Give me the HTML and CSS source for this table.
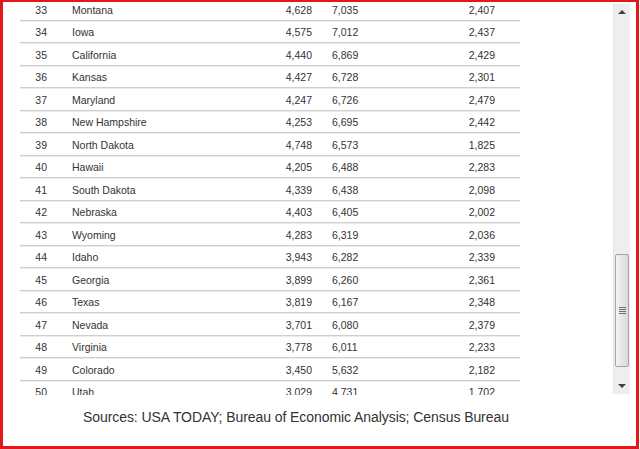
FILE: index.html
```html
<!DOCTYPE html>
<html>
<head>
<meta charset="utf-8">
<link rel="stylesheet" href="styles.css">
</head>
<body>
<div class="frame">
  <div class="viewport">
    <div class="table-area">
      <div class="table">
        <div class="row"><span class="rank">33</span><span class="name">Montana</span><span class="c3">4,628</span><span class="c4">7,035</span><span class="c5">2,407</span></div>
        <div class="row"><span class="rank">34</span><span class="name">Iowa</span><span class="c3">4,575</span><span class="c4">7,012</span><span class="c5">2,437</span></div>
        <div class="row"><span class="rank">35</span><span class="name">California</span><span class="c3">4,440</span><span class="c4">6,869</span><span class="c5">2,429</span></div>
        <div class="row"><span class="rank">36</span><span class="name">Kansas</span><span class="c3">4,427</span><span class="c4">6,728</span><span class="c5">2,301</span></div>
        <div class="row"><span class="rank">37</span><span class="name">Maryland</span><span class="c3">4,247</span><span class="c4">6,726</span><span class="c5">2,479</span></div>
        <div class="row"><span class="rank">38</span><span class="name">New Hampshire</span><span class="c3">4,253</span><span class="c4">6,695</span><span class="c5">2,442</span></div>
        <div class="row"><span class="rank">39</span><span class="name">North Dakota</span><span class="c3">4,748</span><span class="c4">6,573</span><span class="c5">1,825</span></div>
        <div class="row"><span class="rank">40</span><span class="name">Hawaii</span><span class="c3">4,205</span><span class="c4">6,488</span><span class="c5">2,283</span></div>
        <div class="row"><span class="rank">41</span><span class="name">South Dakota</span><span class="c3">4,339</span><span class="c4">6,438</span><span class="c5">2,098</span></div>
        <div class="row"><span class="rank">42</span><span class="name">Nebraska</span><span class="c3">4,403</span><span class="c4">6,405</span><span class="c5">2,002</span></div>
        <div class="row"><span class="rank">43</span><span class="name">Wyoming</span><span class="c3">4,283</span><span class="c4">6,319</span><span class="c5">2,036</span></div>
        <div class="row"><span class="rank">44</span><span class="name">Idaho</span><span class="c3">3,943</span><span class="c4">6,282</span><span class="c5">2,339</span></div>
        <div class="row"><span class="rank">45</span><span class="name">Georgia</span><span class="c3">3,899</span><span class="c4">6,260</span><span class="c5">2,361</span></div>
        <div class="row"><span class="rank">46</span><span class="name">Texas</span><span class="c3">3,819</span><span class="c4">6,167</span><span class="c5">2,348</span></div>
        <div class="row"><span class="rank">47</span><span class="name">Nevada</span><span class="c3">3,701</span><span class="c4">6,080</span><span class="c5">2,379</span></div>
        <div class="row"><span class="rank">48</span><span class="name">Virginia</span><span class="c3">3,778</span><span class="c4">6,011</span><span class="c5">2,233</span></div>
        <div class="row"><span class="rank">49</span><span class="name">Colorado</span><span class="c3">3,450</span><span class="c4">5,632</span><span class="c5">2,182</span></div>
        <div class="row"><span class="rank">50</span><span class="name">Utah</span><span class="c3">3,029</span><span class="c4">4,731</span><span class="c5">1,702</span></div>
      </div>
    </div>
    <div class="scrollbar">
      <div class="arrow up"></div>
      <div class="track">
        <div class="thumb"><span class="grip"></span></div>
      </div>
      <div class="arrow down"></div>
    </div>
  </div>
  <p class="sources">Sources: USA TODAY; Bureau of Economic Analysis; Census Bureau</p>
</div>
</body>
</html>
```

FILE: styles.css
```css
html, body {
  margin: 0;
  padding: 0;
  background: #fff;
}
.frame {
  box-sizing: border-box;
  width: 639px;
  height: 449px;
  border: 3px solid #e3161c;
  border-top-width: 2px;
  font-family: "Liberation Sans", Arial, sans-serif;
}
.viewport {
  display: flex;
  height: 393px;
}
.table-area {
  width: 610px;
  overflow: hidden;
}
.table {
  margin: -3.8px 0 0 17px;
  width: 500px;
}
.row {
  display: grid;
  grid-template-columns: 27px 205px 60px 60px 123px 25px;
  height: 22.5px;
  box-sizing: border-box;
  padding-top: 2px;
  align-items: center;
  border-bottom: 1px solid #cfcfcf;
  box-shadow: 0 1px 0 #ececec;
  font-size: 10.5px;
  color: #333;
}
.rank { text-align: right; }
.name { padding-left: 25px; }
.c3 { text-align: right; }
.c4 { padding-left: 20px; }
.c5 { text-align: right; }
.scrollbar {
  width: 17px;
  margin-top: 2px;
  height: 390px;
  display: flex;
  flex-direction: column;
  background: #eeeeee;
  border-left: 1px solid #e4e4e4;
  box-sizing: border-box;
}
.arrow {
  height: 17px;
  position: relative;
}
.arrow::after {
  content: "";
  position: absolute;
  left: 4px;
  border-left: 4px solid transparent;
  border-right: 4px solid transparent;
}
.arrow.up::after {
  top: 6px;
  border-bottom: 4px solid #404040;
}
.arrow.down::after {
  top: 7px;
  border-top: 4px solid #404040;
}
.track {
  flex: 1;
  display: flex;
  flex-direction: column;
  justify-content: flex-end;
  padding-bottom: 10px;
}
.thumb {
  height: 113px;
  margin: 0 1px 0 1px;
  box-sizing: border-box;
  border: 1px solid #a5a5a5;
  border-radius: 2px;
  background: linear-gradient(to right, #f4f4f4, #e6e6e6 50%, #d9d9d9);
  display: flex;
  align-items: center;
  justify-content: center;
}
.grip {
  width: 7px;
  height: 7px;
  background: repeating-linear-gradient(to bottom, #6f6f6f 0 1px, transparent 1px 2px);
}
.sources {
  margin: 14px 0 0 80px;
  font-size: 14px;
  line-height: 16px;
  letter-spacing: -0.07px;
  color: #333;
}
```
